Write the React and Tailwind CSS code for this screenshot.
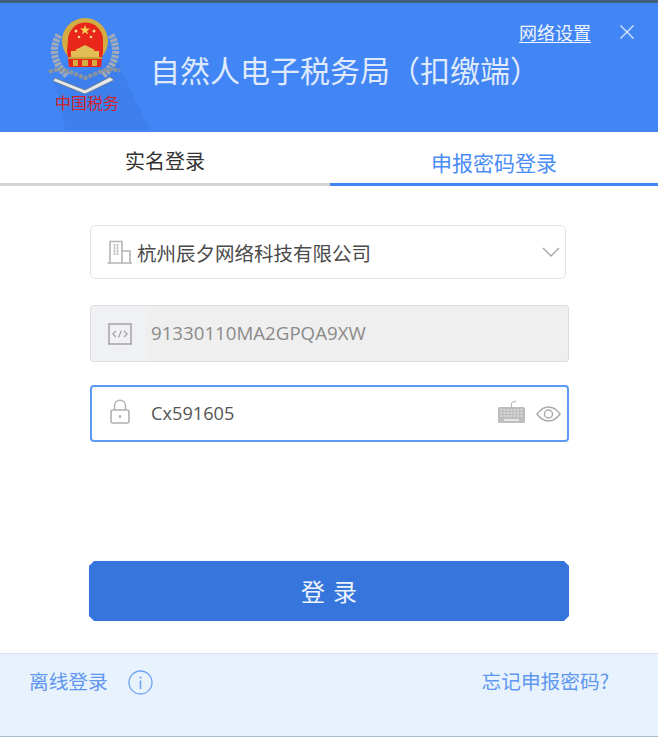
import React from "react";

const cjk = { fontFamily: '"Noto Sans CJK SC", "Noto Sans", sans-serif' };

function Emblem() {
  return (
    <svg width="80" height="80" viewBox="0 0 80 80" className="block">
      {/* wreath */}
      <path d="M15 17 C7 30 9 46 24 58" fill="none" stroke="#a3acb6" strokeWidth="7" strokeDasharray="3 1.2" />
      <path d="M67 17 C75 30 73 46 58 58" fill="none" stroke="#a3acb6" strokeWidth="7" strokeDasharray="3 1.2" />
      <path d="M5 54 C18 48 30 56 41 60 C52 56 64 48 76 53" fill="none" stroke="#8b949d" strokeWidth="4" strokeDasharray="4 1.2" />
      {/* ribbon / chevron */}
      <path d="M11 60 L41 72 L66 59 L70 62 L41 76 L9 63 Z" fill="#e6e9ec" stroke="#6f7882" strokeWidth="0.8" />
      {/* gold ring */}
      <circle cx="41" cy="23" r="23" fill="#d4ad42" />
      {/* red field */}
      <path d="M24 22 A17.5 17.5 0 0 1 59 22 L59 33 L57 49 L25 49 L23 33 Z" fill="#e8261a" />
      {/* stars */}
      <polygon points="41,7 42.3,10.6 46,10.6 43,12.9 44.1,16.5 41,14.3 37.9,16.5 39,12.9 36,10.6 39.7,10.6" fill="#f3cf55" />
      <circle cx="32" cy="13" r="1.5" fill="#f3d98a" />
      <circle cx="50" cy="13" r="1.5" fill="#f3d98a" />
      <circle cx="35" cy="19" r="1.3" fill="#f3d98a" />
      <circle cx="47" cy="19" r="1.3" fill="#f3d98a" />
      {/* Tiananmen */}
      <path d="M31 32 L41 27 L51 32 L49 33 L33 33 Z" fill="#e3bd55" />
      <rect x="27" y="33" width="28" height="6" fill="#e3bd55" />
      <path d="M24 39 H58 V41 H24 Z" fill="#c99f38" />
      <path d="M29 42 H34 V48 H29 Z M48 42 H53 V48 H48 Z M38 42 H44 V48 H38 Z" fill="#d4ad42" />
    </svg>
  );
}

function CloseIcon() {
  return (
    <svg width="16" height="16" viewBox="0 0 16 16" className="block">
      <path d="M1.5 1.5 L14.5 14.5 M14.5 1.5 L1.5 14.5" stroke="#dfe9fb" strokeWidth="1.2" fill="none" />
    </svg>
  );
}

function BuildingIcon() {
  return (
    <svg width="25" height="24" viewBox="0 0 25 24" className="block">
      <path d="M3 23 V1.5 H15 V23 M15 11 H23 V23 M0.5 23 H25" fill="none" stroke="#b4b4b4" strokeWidth="1.6" />
      <path d="M6 5 H12 M6 8 H12 M6 11 H12 M6 14 H12 M7.5 4 V15 M10.5 4 V15" fill="none" stroke="#c8c8c8" strokeWidth="1" />
    </svg>
  );
}

function CodeIcon() {
  return (
    <svg width="24" height="22" viewBox="0 0 24 22" className="block">
      <rect x="1" y="1" width="22" height="20" fill="none" stroke="#a8a8a8" strokeWidth="1.6" />
      <path d="M8 8 L4.8 11 L8 14 M16 8 L19.2 11 L16 14 M13.4 7.5 L10.6 14.5" fill="none" stroke="#a0a0a0" strokeWidth="1.1" />
    </svg>
  );
}

function LockIcon() {
  return (
    <svg width="20" height="25" viewBox="0 0 20 25" className="block">
      <path d="M4.5 11 V7 C4.5 3.5 7 1.2 10 1.2 C13 1.2 15.5 3.5 15.5 7 V11" fill="none" stroke="#b0b0b0" strokeWidth="1.5" />
      <rect x="1" y="11" width="18" height="13" rx="2" fill="none" stroke="#b0b0b0" strokeWidth="1.6" />
      <rect x="9.2" y="16" width="1.6" height="3" fill="#a0a0a0" />
    </svg>
  );
}

function KeyboardIcon() {
  return (
    <svg width="29" height="24" viewBox="0 0 29 24" className="block">
      <path d="M14.5 7 V3.5 C14.5 1.5 17 2.5 19 1" fill="none" stroke="#b8b8b8" strokeWidth="1.2" />
      <rect x="1" y="7" width="27" height="16" rx="1.5" fill="#bdbdbd" />
      <path d="M3 10 H26 M3 13 H26 M3 16 H26" stroke="#f1f1f1" strokeWidth="1" strokeDasharray="2 1.4" fill="none" />
      <path d="M7 20 H22" stroke="#f1f1f1" strokeWidth="1.6" fill="none" />
    </svg>
  );
}

function EyeIcon() {
  return (
    <svg width="25" height="16" viewBox="0 0 25 16" className="block">
      <path d="M1 8 C5 2.5 9 1 12.5 1 C16 1 20 2.5 24 8 C20 13.5 16 15 12.5 15 C9 15 5 13.5 1 8 Z" fill="none" stroke="#ababab" strokeWidth="1.5" />
      <circle cx="12.5" cy="8" r="4" fill="none" stroke="#ababab" strokeWidth="1.5" />
    </svg>
  );
}

function InfoIcon() {
  return (
    <svg width="25" height="25" viewBox="0 0 25 25" className="block">
      <circle cx="12.5" cy="12.5" r="11.5" fill="none" stroke="#6ea2f2" strokeWidth="1.3" />
      <circle cx="12.5" cy="7.5" r="1.1" fill="#6ea2f2" />
      <rect x="11.7" y="10.5" width="1.6" height="8.5" fill="#6ea2f2" />
    </svg>
  );
}

export default function App() {
  return (
    <div className="w-[658px] h-[737px] bg-white flex flex-col overflow-hidden" style={cjk}>
      <div className="h-[3px] bg-[#44607f]" />

      {/* header */}
      <header className="relative h-[129px] bg-[#4285f4] flex items-start overflow-hidden">
        <svg width="160" height="129" viewBox="0 0 160 129" className="absolute left-0 top-0">
          <path d="M115 55 L150 127 H66 L55 80 Z" fill="#3d7fec" />
        </svg>
        <div className="relative ml-[44px] mt-[15px] w-[80px] shrink-0">
          <Emblem />
          <div className="absolute left-[11px] top-[73px] text-[16px] leading-[22px] font-normal text-[#d2232a] whitespace-nowrap">
            中国税务
          </div>
        </div>
        <h1 className="relative ml-[26px] mt-[46px] text-[30px] leading-[40px] font-normal text-[#dfeafd] whitespace-nowrap">
          自然人电子税务局（扣缴端）
        </h1>
        <div className="absolute right-[67px] top-[17px] text-[18px] leading-[24px] text-[#f0f5fe] underline underline-offset-2">
          网络设置
        </div>
        <div className="absolute right-[23px] top-[21px]">
          <CloseIcon />
        </div>
      </header>

      {/* tabs */}
      <div className="flex h-[54px]">
        <div className="w-[330px] border-b-[3px] border-[#d4d4d4] flex justify-center pt-[14px] text-[20px] leading-[30px] text-[#333333]">
          实名登录
        </div>
        <div className="w-[328px] border-b-[3px] border-[#4285f4] flex justify-center pt-[15px] text-[21px] leading-[30px] text-[#4a8cf5]">
          申报密码登录
        </div>
      </div>

      {/* form */}
      <div className="flex flex-col pl-[90px] pt-[39px]">
        <div className="w-[476px] h-[54px] border border-[#e4e4e4] rounded-[5px] flex items-center pl-[16px] pr-[5px]">
          <BuildingIcon />
          <span className="ml-[5px] mt-[2px] text-[19.5px] text-[#4a4a4a] whitespace-nowrap">杭州辰夕网络科技有限公司</span>
          <svg width="18" height="10" viewBox="0 0 18 10" className="ml-auto">
            <path d="M1 1 L9 9 L17 1" fill="none" stroke="#a6a6a6" strokeWidth="1.4" />
          </svg>
        </div>

        <div className="mt-[26px] w-[479px] h-[57px] border border-[#dedede] rounded-[3px] bg-[#efefef] flex items-center overflow-hidden">
          <div className="w-[55px] h-full bg-[#f0f1f5] flex items-center justify-center pl-[2px] shrink-0">
            <CodeIcon />
          </div>
          <span className="ml-[5px] text-[18.7px] text-[#8a8a8a] whitespace-nowrap" style={{ fontFamily: '"Open Sans", sans-serif' }}>
            91330110MA2GPQA9XW
          </span>
        </div>

        <div className="mt-[23px] w-[479px] h-[57px] border-2 border-[#5c9af6] rounded-[4px] flex items-center">
          <div className="w-[56px] mb-[4px] flex justify-center shrink-0">
            <LockIcon />
          </div>
          <span className="ml-[3px] text-[18.2px] text-[#555555]" style={{ fontFamily: '"Open Sans", sans-serif' }}>
            Cx591605
          </span>
          <div className="ml-auto mr-[6px] flex items-center gap-[10px]">
            <div className="mb-[4px]">
              <KeyboardIcon />
            </div>
            <EyeIcon />
          </div>
        </div>
      </div>

      {/* login */}
      <div className="pl-[89px] pt-[119px]">
        <button
          className="w-[480px] h-[60px] bg-[#3676dc] text-[#eef4fd] text-[24px] tracking-[8px] pl-[8px] flex items-center justify-center"
          style={{ clipPath: "polygon(5px 0, calc(100% - 5px) 0, 100% 5px, 100% calc(100% - 5px), calc(100% - 5px) 100%, 5px 100%, 0 calc(100% - 5px), 0 5px)" }}
        >
          登录
        </button>
      </div>

      {/* footer */}
      <footer className="mt-[32px] flex-1 bg-[#e7f2fd] border-t border-[#d3e3f5] border-b border-b-[#a9bed0] flex items-start pt-[13px] pl-[29px] pr-[49px] text-[19.7px] leading-[28px] text-[#5f97f0]">
        <span>离线登录</span>
        <span className="ml-[20px] mt-[3px]">
          <InfoIcon />
        </span>
        <span className="ml-auto">忘记申报密码?</span>
      </footer>
    </div>
  );
}
